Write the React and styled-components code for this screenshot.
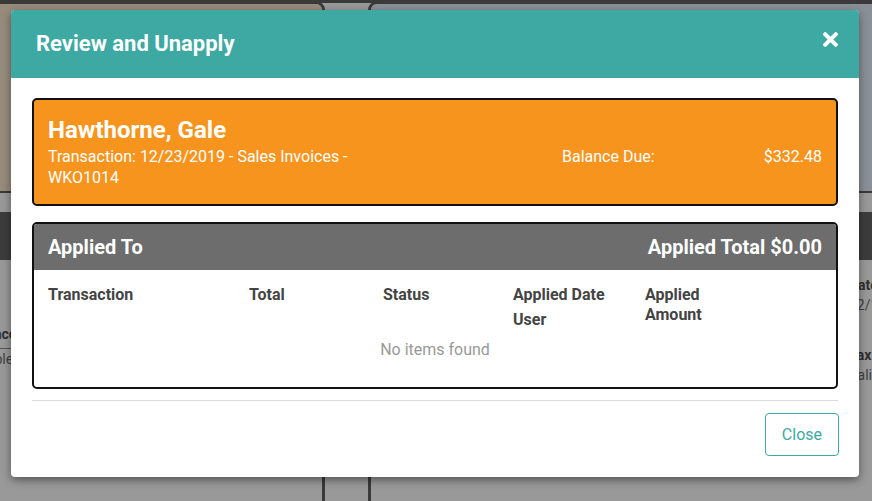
import styled, { createGlobalStyle } from "styled-components";

const GlobalStyle = createGlobalStyle`
  body {
    margin: 0;
    font-family: Roboto, "Liberation Sans", sans-serif;
  }
  * { box-sizing: border-box; }
`;

const teal = "#3DA9A2";

// ---- dimmed page behind the dialog ----
const Page = styled.div`
  position: relative;
  width: 872px;
  height: 501px;
  overflow: hidden;
  background: #999;
`;

const TopBar = styled.div`
  height: 3px;
  background: #3a3a3a;
`;

const Cards = styled.div`
  display: flex;
  gap: 43px;
  margin-top: -2px;
  margin-left: ${(p) => p.$offset}px;
`;

const BgCard = styled.div`
  flex: 0 0 ${(p) => p.$width}px;
  height: 560px;
  border: 3px solid #3a3a3a;
  border-radius: 9px;
  overflow: hidden;
  background: #999;
`;

const Cover = styled.div`
  height: 189px;
  background: ${(p) => p.$tone};
  border-bottom: 2px solid #3a3a3a;
`;

const CardBand = styled.div`
  height: 48px;
  margin-top: 19px;
  background: #3c3c3c;
`;

const CardFields = styled.div`
  display: grid;
  grid-template-columns: ${(p) => p.$cols};
  padding: ${(p) => p.$pad};
  font-size: 14px;
`;

const FieldLabel = styled.div`
  font-weight: 700;
  color: #2f2f2f;
  line-height: 20px;
  ${(p) => p.$underline && "border-bottom: 1px solid #555; padding-bottom: 4px;"}
`;

const FieldValue = styled.div`
  color: #3f3f3f;
  line-height: 20px;
  margin-bottom: ${(p) => p.$gap || 0}px;
`;

// ---- dialog ----
const Overlay = styled.div`
  position: absolute;
  inset: 0;
  padding: 10px 0 0 11px;
`;

const Modal = styled.div`
  width: 848px;
  background: #fff;
  border-radius: 4px;
  overflow: hidden;
  box-shadow: 0 3px 8px rgba(0, 0, 0, 0.45);
`;

const Header = styled.div`
  height: 68px;
  background: ${teal};
  display: flex;
  align-items: center;
  justify-content: space-between;
  padding: 0 21px 0 25px;
`;

const Title = styled.h2`
  margin: -2px 0 0;
  font-size: 22px;
  font-weight: 700;
  color: #fff;
`;

const CloseIcon = styled.button`
  border: none;
  background: none;
  padding: 0;
  display: flex;
  margin-top: -10px;
  cursor: pointer;
`;

const Body = styled.div`
  padding: 20px 21px 0;
`;

const Summary = styled.div`
  display: flex;
  background: #F7941E;
  border: 2px solid #111;
  border-radius: 5px;
  padding: 16px 14px 16px;
  color: #fff;
`;

const Who = styled.div`
  flex: 1;
`;

const Name = styled.div`
  font-size: 24px;
  font-weight: 700;
  line-height: 28px;
  margin-bottom: 2px;
`;

const Meta = styled.div`
  font-size: 16px;
  line-height: 21px;
  max-width: 310px;
`;

const Balance = styled.div`
  flex: 0 0 260px;
  display: flex;
  justify-content: space-between;
  font-size: 16px;
  line-height: 21px;
  margin-top: 30px;
`;

const Applied = styled.div`
  margin-top: 16px;
  border: 2px solid #111;
  border-radius: 5px;
  overflow: hidden;
`;

const AppliedHead = styled.div`
  height: 46px;
  background: #6D6D6D;
  display: flex;
  align-items: center;
  justify-content: space-between;
  padding: 0 14px;
  font-size: 20px;
  font-weight: 700;
  color: #fff;
`;

const TableHead = styled.div`
  display: grid;
  grid-template-columns: 201px 134px 130px 132px 1fr;
  padding: 15px 14px 0;
  font-size: 16px;
  font-weight: 700;
  line-height: 20px;
  color: #444;
`;

const HeadCell = styled.div`
  max-width: ${(p) => p.$max || "none"};
`;

const SubHead = styled.div`
  margin-top: 5px;
`;

const Empty = styled.div`
  padding: 10px 0 27px;
  text-align: center;
  font-size: 16px;
  line-height: 20px;
  color: #999;
`;

const Divider = styled.hr`
  margin: 11px 0 0;
  border: none;
  border-top: 1px solid #ddd;
`;

const Footer = styled.div`
  display: flex;
  justify-content: flex-end;
  padding: 12px 20px 21px;
`;

const CloseButton = styled.button`
  height: 43px;
  padding: 0 16px;
  border: 1px solid ${teal};
  border-radius: 4px;
  background: #fff;
  color: ${teal};
  font-family: inherit;
  font-size: 16px;
  cursor: pointer;
`;

const XIcon = () => (
  <svg width="15" height="15" viewBox="0 80 352 352" fill="#fff">
    <path d="M242.72 256l100.07-100.07c12.28-12.28 12.28-32.19 0-44.48l-22.24-22.24c-12.28-12.28-32.19-12.28-44.48 0L176 189.28 75.93 89.21c-12.28-12.28-32.19-12.28-44.48 0L9.21 111.45c-12.28 12.28-12.28 32.19 0 44.48L109.28 256 9.21 356.07c-12.28 12.28-12.28 32.19 0 44.48l22.24 22.24c12.28 12.28 32.2 12.28 44.48 0L176 322.72l100.07 100.07c12.28 12.28 32.2 12.28 44.48 0l22.24-22.24c12.28-12.28 12.28-32.19 0-44.48L242.72 256z" />
  </svg>
);

export default function App() {
  return (
    <Page>
      <GlobalStyle />
      <TopBar />
      <Cards $offset={-40}>
        <BgCard $width={365}>
          <Cover $tone="#978b7c" />
          <CardBand />
          <CardFields $cols="1fr" $pad="64px 0 0 4px">
            <FieldLabel $underline>Finance Charge</FieldLabel>
            <FieldValue>Disabled</FieldValue>
          </CardFields>
        </BgCard>
        <BgCard $width={560}>
          <Cover $tone="#8a9097" />
          <CardBand />
          <CardFields $cols="462px 1fr" $pad="15px 0 0 16px">
            <div />
            <div>
              <FieldLabel>Date</FieldLabel>
              <FieldValue $gap={30}>12/18/2019</FieldValue>
              <FieldLabel>Tax</FieldLabel>
              <FieldValue>Valid</FieldValue>
            </div>
          </CardFields>
        </BgCard>
      </Cards>

      <Overlay>
        <Modal>
          <Header>
            <Title>Review and Unapply</Title>
            <CloseIcon aria-label="Close">
              <XIcon />
            </CloseIcon>
          </Header>
          <Body>
            <Summary>
              <Who>
                <Name>Hawthorne, Gale</Name>
                <Meta>Transaction: 12/23/2019 - Sales Invoices - WKO1014</Meta>
              </Who>
              <Balance>
                <span>Balance Due:</span>
                <span>$332.48</span>
              </Balance>
            </Summary>
            <Applied>
              <AppliedHead>
                <span>Applied To</span>
                <span>Applied Total $0.00</span>
              </AppliedHead>
              <TableHead>
                <HeadCell>Transaction</HeadCell>
                <HeadCell>Total</HeadCell>
                <HeadCell>Status</HeadCell>
                <HeadCell>
                  Applied Date
                  <SubHead>User</SubHead>
                </HeadCell>
                <HeadCell $max="80px">Applied Amount</HeadCell>
              </TableHead>
              <Empty>No items found</Empty>
            </Applied>
            <Divider />
          </Body>
          <Footer>
            <CloseButton>Close</CloseButton>
          </Footer>
        </Modal>
      </Overlay>
    </Page>
  );
}
